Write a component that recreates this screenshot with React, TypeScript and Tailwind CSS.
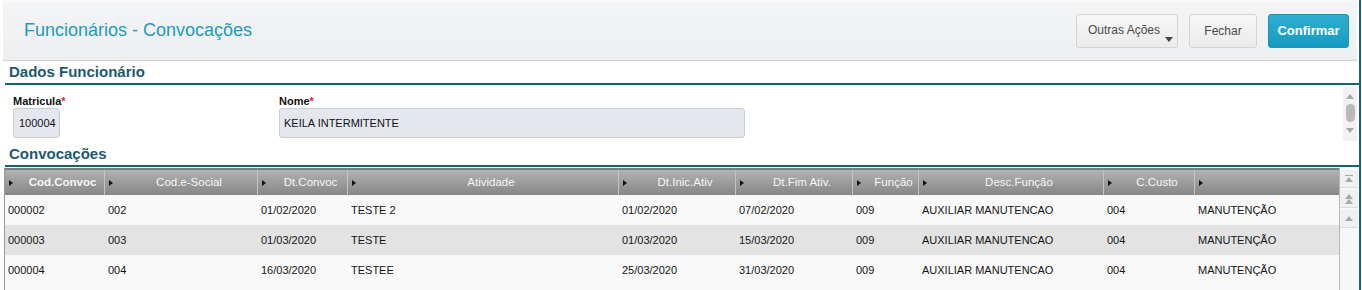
const columns = [
  { label: 'Cod.Convoc', w: 'w-[100px]', bold: true },
  { label: 'Cod.e-Social', w: 'w-[153px]' },
  { label: 'Dt.Convoc', w: 'w-[90px]' },
  { label: 'Atividade', w: 'w-[271px]' },
  { label: 'Dt.Inic.Ativ', w: 'w-[117px]' },
  { label: 'Dt.Fim Ativ.', w: 'w-[117px]' },
  { label: 'Função', w: 'w-[66px]' },
  { label: 'Desc.Função', w: 'w-[185px]' },
  { label: 'C.Custo', w: 'w-[91px]' },
  { label: '', w: 'w-[144px]' },
];

const rows = [
  ['000002', '002', '01/02/2020', 'TESTE 2', '01/02/2020', '07/02/2020', '009', 'AUXILIAR MANUTENCAO', '004', 'MANUTENÇÃO'],
  ['000003', '003', '01/03/2020', 'TESTE', '01/03/2020', '15/03/2020', '009', 'AUXILIAR MANUTENCAO', '004', 'MANUTENÇÃO'],
  ['000004', '004', '16/03/2020', 'TESTEE', '25/03/2020', '31/03/2020', '009', 'AUXILIAR MANUTENCAO', '004', 'MANUTENÇÃO'],
];

function Caret() {
  return <span className="mr-[8px] w-0 h-0 border-y-[3.5px] border-y-transparent border-l-[4px] border-l-[#111] shrink-0" />;
}

function UpTri({ className = '' }: { className?: string }) {
  return <span className={`w-0 h-0 border-x-[4px] border-x-transparent border-b-[5px] border-b-[#a8a8a8] ${className}`} />;
}

function SectionTitle({ children }: { children: string }) {
  return (
    <div className="flex flex-col">
      <div className="pl-[6px] h-[22px] flex items-center text-[15px] font-bold text-[#1b5a6e]">{children}</div>
      <div className="ml-[2px] h-[2px] bg-[#15646f]" />
    </div>
  );
}

export default function App() {
  return (
    <div className="w-[1362px] h-[290px] bg-white flex overflow-hidden font-['Liberation_Sans',Arial,sans-serif]">
      <div className="w-[3px] shrink-0" />
      <div className="w-[1356px] flex flex-col">
        {/* top bar */}
        <div className="h-[61px] mr-[2px] border-t-2 border-t-[#f8f8f8] border-b border-b-[#d6d6d6] bg-gradient-to-b from-[#f3f4f5] to-[#eeeff0] flex items-center">
          <h1 className="pl-[21px] text-[18px] text-[#1b9bc0] flex-1 pb-[1px]">Funcionários - Convocações</h1>
          <div className="flex items-center gap-[11px] pr-[8px] pb-[1px]">
            <button className="relative w-[102px] h-[34px] rounded-[3px] border border-[#d3d3d3] bg-gradient-to-b from-[#f7f7f7] to-[#ebebeb] text-[12px] text-[#4a4a4a] text-left pl-[11px] pb-[2px]">
              Outras Ações
              <span className="absolute right-[4px] bottom-[5px] w-0 h-0 border-x-[4px] border-x-transparent border-t-[5px] border-t-[#444]" />
            </button>
            <button className="w-[68px] h-[34px] rounded-[3px] border border-[#d3d3d3] bg-gradient-to-b from-[#f7f7f7] to-[#ebebeb] text-[12px] text-[#4a4a4a]">
              Fechar
            </button>
            <button className="w-[81px] h-[34px] rounded-[3px] border border-[#1a93b5] bg-gradient-to-b from-[#2fadd0] to-[#149bc1] text-[13px] font-bold text-white">
              Confirmar
            </button>
          </div>
        </div>

        <SectionTitle>Dados Funcionário</SectionTitle>

        {/* form */}
        <div className="h-[58px] flex">
          <div className="flex-1 flex pt-[8px] pl-[10px]">
            <div className="w-[266px] flex flex-col">
              <label className="text-[11px] font-bold text-[#111] h-[14px]">
                Matricula<span className="text-[#e0213a]">*</span>
              </label>
              <div className="mt-[1px] w-[47px] h-[30px] rounded-[3px] border border-[#c9ccd1] bg-[#e4e7ee] text-[11px] text-[#111] flex items-center pl-[5px]">
                100004
              </div>
            </div>
            <div className="flex flex-col">
              <label className="text-[11px] font-bold text-[#111] h-[14px]">
                Nome<span className="text-[#e0213a]">*</span>
              </label>
              <div className="mt-[1px] w-[466px] h-[30px] rounded-[3px] border border-[#c9ccd1] bg-[#e4e7ee] text-[11px] text-[#111] flex items-center pl-[4px]">
                KEILA INTERMITENTE
              </div>
            </div>
          </div>
          <div className="mt-[2px] mr-[2px] w-[14px] h-[54px] bg-[#f2f2f2] flex flex-col items-center pt-[7px]">
            <UpTri />
            <span className="mt-[5px] w-[9px] h-[18px] rounded-[5px] bg-[#b9b9b9]" />
            <span className="mt-[6px] w-0 h-0 border-x-[4px] border-x-transparent border-t-[5px] border-t-[#a8a8a8]" />
          </div>
        </div>

        <SectionTitle>Convocações</SectionTitle>

        {/* table */}
        <div className="mt-[1px] ml-[1px] mr-[2px] flex flex-1">
          <div className="flex flex-col border-l border-l-[#9a9a9a]">
            <div className="flex h-[27px] border-t-2 border-t-[#7c7c7c] bg-gradient-to-b from-[#b2b2b2] to-[#878787]">
              {columns.map((c, i) => (
                <div
                  key={i}
                  className={`${c.w} flex items-center pl-[4px] border-r border-r-[#c4c4c4] last:border-r-0 shrink-0`}
                >
                  <Caret />
                  <span className={`flex-1 text-center text-[11.5px] text-[#f6f6f6] ${c.bold ? 'font-bold' : ''}`}>
                    {c.label}
                  </span>
                </div>
              ))}
            </div>
            {rows.map((r, ri) => (
              <div key={ri} className={`flex h-[30px] ${ri % 2 === 1 ? 'bg-[#e3e3e3]' : 'bg-[#f9f9f9]'}`}>
                {r.map((cell, ci) => (
                  <div
                    key={ci}
                    className={`${columns[ci].w} shrink-0 flex items-center pl-[3px] text-[11px] text-[#151515]`}
                  >
                    {cell}
                  </div>
                ))}
              </div>
            ))}
            <div className="flex-1 bg-[#f9f9f9]" />
          </div>
          <div className="w-[19px] border-l border-l-[#b8b8b8] bg-[#f6f7f9] flex flex-col items-center pt-[2px] gap-[2px]">
            <div className="w-[18px] h-[18px] bg-[#eef0f2] border-b border-b-[#dcdcdc] flex flex-col items-center justify-center">
              <span className="w-[8px] h-[1px] bg-[#a8a8a8] mb-[1px]" />
              <UpTri />
            </div>
            <div className="w-[18px] h-[18px] bg-[#eef0f2] border-b border-b-[#dcdcdc] flex flex-col items-center justify-center">
              <UpTri />
              <UpTri />
            </div>
            <div className="w-[18px] h-[18px] bg-[#eef0f2] border-b border-b-[#dcdcdc] flex flex-col items-center justify-center">
              <UpTri />
            </div>
          </div>
        </div>
      </div>
      <div className="w-[2px] bg-[#15646f] shrink-0" />
    </div>
  );
}
